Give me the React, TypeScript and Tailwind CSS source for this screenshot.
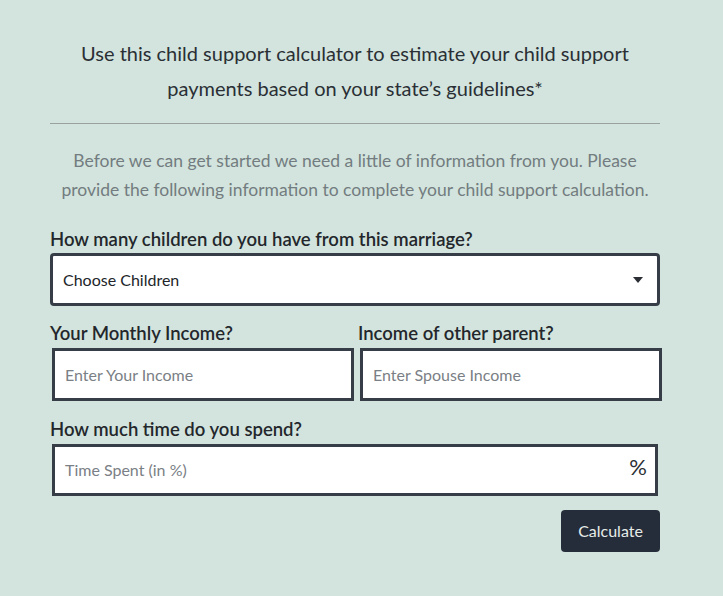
import React from "react";

export default function App() {
  return (
    <div
      className="min-h-[596px] w-full bg-[#d2e4dd] text-[#212529]"
      style={{ fontFamily: "Lato, 'Noto Sans', sans-serif" }}
    >
      <div className="ml-[50px] w-[610px] pt-[36px]">
        <h1 className="text-center text-[20px] leading-[35px] font-normal text-[#2a2f35]">
          Use this child support calculator to estimate your child support payments based on your state’s guidelines*
        </h1>
        <hr className="mt-[17px] border-0 h-px bg-[#9aa29f]" />
        <p className="mt-[22px] text-center text-[17.5px] leading-[29px] text-[#737c80]">
          Before we can get started we need a little of information from you. Please provide the following information to complete your child support calculation.
        </p>

        <label className="mt-[23px] block text-[18.5px] leading-[24px] font-semibold text-[#23272c]">
          How many children do you have from this marriage?
        </label>
        <div className="mt-[2px] relative flex h-[53px] items-center rounded-[4px] border-[3px] border-[#363d47] bg-white pl-[10px] pr-[14px]">
          <span className="text-[16px] text-[#212529]">Choose Children</span>
          <svg className="ml-auto" width="10" height="6" viewBox="0 0 10 6">
            <path d="M0 0 H10 L5 6 Z" fill="#2b2f35" />
          </svg>
        </div>

        <div className="mt-[15px] flex gap-[4px]">
          <div className="w-[304px] shrink-0">
            <label className="block text-[18.5px] leading-[24px] font-semibold text-[#23272c]">
              Your Monthly Income?
            </label>
            <div className="ml-[2px] mt-[3px] flex h-[53px] items-center border-[3px] border-[#363d47] bg-white pl-[10px]">
              <span className="text-[16px] text-[#7a8085]">Enter Your Income</span>
            </div>
          </div>
          <div className="w-[304px] shrink-0">
            <label className="block text-[18.5px] leading-[24px] font-semibold text-[#23272c]">
              Income of other parent?
            </label>
            <div className="ml-[2px] mt-[3px] flex h-[53px] items-center border-[3px] border-[#363d47] bg-white pl-[10px]">
              <span className="text-[16px] text-[#7a8085]">Enter Spouse Income</span>
            </div>
          </div>
        </div>

        <label className="mt-[16px] block text-[18.5px] leading-[24px] font-semibold text-[#23272c]">
          How much time do you spend?
        </label>
        <div className="ml-[2px] mr-[2px] mt-[3px] flex h-[52px] items-center border-[3px] border-[#363d47] bg-white pl-[10px] pr-[8px]">
          <span className="text-[16px] text-[#7a8085]">Time Spent (in %)</span>
          <span className="ml-auto -mt-[8px] text-[22px] text-[#2b2f35]">%</span>
        </div>

        <div className="mt-[14px] flex justify-end">
          <button className="h-[42px] w-[99px] rounded-[4px] bg-[#262d3a] text-[16px] text-[#e6ece9]">
            Calculate
          </button>
        </div>
      </div>
    </div>
  );
}
